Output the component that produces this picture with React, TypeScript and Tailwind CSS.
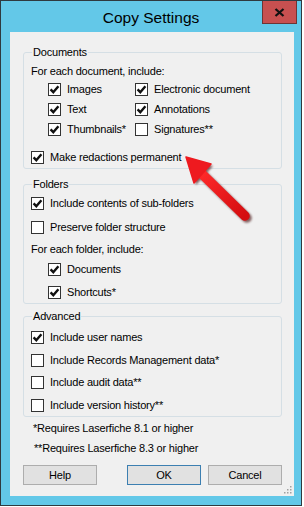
import React from "react";

const font = { fontFamily: '"Liberation Sans", Arial, sans-serif' };

const CheckBox = ({ checked }: { checked: boolean }) => (
  <div className="w-[13px] h-[13px] shrink-0 border border-[#333333] bg-white flex items-center justify-center">
    {checked && (
      <svg width="11" height="11" viewBox="0 0 11 11">
        <path d="M1.6 5.4 L4.3 8.2 L9.4 2.2" fill="none" stroke="#111111" strokeWidth="2.4" />
      </svg>
    )}
  </div>
);

const Check = ({
  label,
  checked,
  className = "",
}: {
  label: string;
  checked: boolean;
  className?: string;
}) => (
  <div className={`h-[20px] flex items-center gap-[6px] ${className}`}>
    <CheckBox checked={checked} />
    <span>{label}</span>
  </div>
);

const Group = ({
  title,
  className = "",
  children,
}: {
  title: string;
  className?: string;
  children: React.ReactNode;
}) => (
  <fieldset
    className={`ml-[13px] w-[259px] border border-[#d5dfe5] rounded-[3px] pl-[7px] pb-[1px] ${className}`}
  >
    <legend className="ml-[1px] px-[1px] h-[14px] leading-[14px]">{title}</legend>
    {children}
  </fieldset>
);

const Btn = ({ label, primary }: { label: string; primary?: boolean }) => (
  <div
    className={`w-[74px] h-[20px] flex items-center justify-center bg-[#e1e1e1] border ${
      primary ? "border-[#3c7fb1]" : "border-[#adadad]"
    }`}
  >
    {label}
  </div>
);

export default function App() {
  return (
    <div className="w-[304px] h-[507px] bg-white relative" style={font}>
      <div className="w-[302px] h-[506px] border border-[#2f3a40] bg-[#63c8e8] flex flex-col relative">
        {/* title bar */}
        <div className="h-[31px] flex items-center justify-center pt-[3px]">
          <span className="text-[15.5px] text-black">Copy Settings</span>
        </div>
        <div className="absolute top-0 right-[4px] w-[35px] h-[23px] bg-[#c75050] border border-t-0 border-[#6e3434] flex items-center justify-center">
          <svg width="11" height="9" viewBox="0 0 11 9">
            <path d="M1.5 1 L9.5 8 M9.5 1 L1.5 8" stroke="#111" strokeWidth="2.3" />
          </svg>
        </div>

        {/* client area */}
        <div className="ml-[9px] w-[284px] h-[464px] bg-[#f0f0f0] text-[11px] tracking-[-0.2px] text-black flex flex-col relative">
          <Group title="Documents" className="mt-[13px]">
            <div className="mt-[4px] h-[16px] flex items-center">For each document, include:</div>
            <div className="grid grid-cols-[87px_1fr] pl-[17px]">
              <Check label="Images" checked />
              <Check label="Electronic document" checked />
              <Check label="Text" checked />
              <Check label="Annotations" checked />
              <Check label="Thumbnails*" checked />
              <Check label="Signatures**" checked={false} />
            </div>
            <Check label="Make redactions permanent" checked className="mt-[8px]" />
          </Group>

          <Group title="Folders" className="mt-[8px]">
            <Check label="Include contents of sub-folders" checked className="mt-[2px]" />
            <Check label="Preserve folder structure" checked={false} className="mt-[4px]" />
            <div className="mt-[2px] h-[20px] flex items-center">For each folder, include:</div>
            <Check label="Documents" checked className="ml-[17px]" />
            <Check label="Shortcuts*" checked className="ml-[17px] mt-[3px]" />
          </Group>

          <Group title="Advanced" className="mt-[5px]">
            <Check label="Include user names" checked className="mt-[4px]" />
            <Check label="Include Records Management data*" checked={false} className="mt-[3px]" />
            <Check label="Include audit data**" checked={false} className="mt-[2px]" />
            <Check label="Include version history**" checked={false} className="mt-[3px]" />
          </Group>

          <div className="mt-[3px] h-[16px] flex items-center pl-[23px]">*Requires Laserfiche 8.1 or higher</div>
          <div className="mt-[4px] h-[16px] flex items-center pl-[24px]">**Requires Laserfiche 8.3 or higher</div>

          <div className="mt-[9px] pl-[13px] flex">
            <Btn label="Help" />
            <div className="ml-[30px]">
              <Btn label="OK" primary />
            </div>
            <div className="ml-[7px]">
              <Btn label="Cancel" />
            </div>
          </div>

          {/* size grip */}
          <svg className="absolute right-[2px] bottom-[2px]" width="9" height="9" viewBox="0 0 9 9">
            {[
              [7, 1],
              [4, 4],
              [7, 4],
              [1, 7],
              [4, 7],
              [7, 7],
            ].map(([x, y], i) => (
              <rect key={i} x={x} y={y} width="1.5" height="1.5" fill="#a0a0a0" />
            ))}
          </svg>
        </div>
      </div>

      {/* red annotation arrow */}
      <svg className="absolute left-0 top-0 pointer-events-none" width="304" height="507" viewBox="0 0 304 507">
        <defs>
          <filter id="sh" x="-20%" y="-20%" width="140%" height="140%">
            <feGaussianBlur stdDeviation="1.3" />
          </filter>
          <linearGradient id="rg" x1="0" y1="0" x2="1" y2="1">
            <stop offset="0" stopColor="#ff2a2a" />
            <stop offset="1" stopColor="#d40d10" />
          </linearGradient>
        </defs>
        <g transform="translate(2 2)" filter="url(#sh)" opacity="0.6">
          <line x1="200" y1="172" x2="245" y2="216" stroke="#3a0000" strokeWidth="9.5" strokeLinecap="round" />
          <polygon points="186,157 211,164 194,183" fill="#3a0000" />
        </g>
        <line x1="200" y1="172" x2="245" y2="216" stroke="url(#rg)" strokeWidth="9.5" strokeLinecap="round" />
        <polygon points="186,157 211,164 194,183" fill="#ee1a1f" strokeLinejoin="round" stroke="#ee1a1f" strokeWidth="1.5" />
      </svg>
    </div>
  );
}
